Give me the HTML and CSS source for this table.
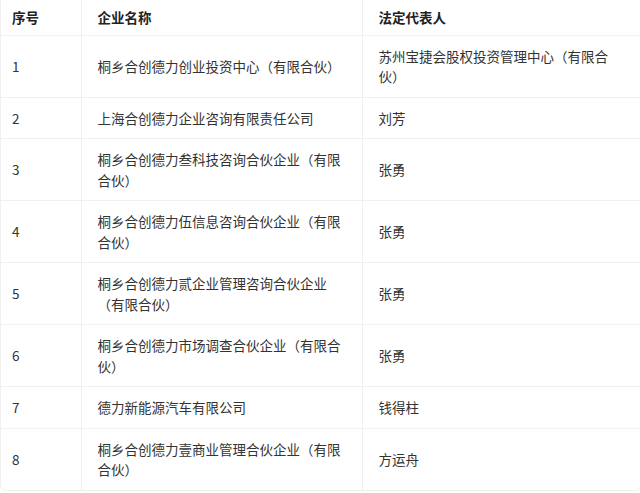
FILE: index.html
```html
<!DOCTYPE html>
<html>
  <head>
    <meta charset="utf-8">
    <title>关联企业</title>
    <link rel="stylesheet" href="styles.css">
  </head>

  <body>
    <div class="table-wrap">
      <table class="company-table">
        <colgroup>
          <col class="col-no">
          <col class="col-name">
          <col class="col-rep">
        </colgroup>
        <thead>
          <tr>
            <th>序号</th>
            <th>企业名称</th>
            <th>法定代表人</th>
          </tr>
        </thead>
        <tbody>
          <tr>
            <td>1</td>
            <td>桐乡合创德力创业投资中心（有限合伙）</td>
            <td>苏州宝捷会股权投资管理中心（有限合伙）</td>
          </tr>
          <tr>
            <td>2</td>
            <td>上海合创德力企业咨询有限责任公司</td>
            <td>刘芳</td>
          </tr>
          <tr>
            <td>3</td>
            <td>桐乡合创德力叁科技咨询合伙企业（有限合伙）</td>
            <td>张勇</td>
          </tr>
          <tr>
            <td>4</td>
            <td>桐乡合创德力伍信息咨询合伙企业（有限合伙）</td>
            <td>张勇</td>
          </tr>
          <tr>
            <td>5</td>
            <td>桐乡合创德力贰企业管理咨询合伙企业<br>（有限合伙）</td>
            <td>张勇</td>
          </tr>
          <tr>
            <td>6</td>
            <td>桐乡合创德力市场调查合伙企业（有限合伙）</td>
            <td>张勇</td>
          </tr>
          <tr>
            <td>7</td>
            <td>德力新能源汽车有限公司</td>
            <td>钱得柱</td>
          </tr>
          <tr>
            <td>8</td>
            <td>桐乡合创德力壹商业管理合伙企业（有限合伙）</td>
            <td>方运舟</td>
          </tr>
        </tbody>
      </table>
    </div>
  </body>
</html>
```

FILE: styles.css
```css
body {
  margin: 0;
  background: #fff;
  font-family: "Noto Sans CJK SC", "Noto Sans", sans-serif;
  font-size: 13.5px;
  color: #333;
}

.table-wrap {
  width: 639px;
  border: 1px solid #f0f0f0;
  border-top: none;
  border-radius: 0 0 6px 6px;
  overflow: hidden;
}

.company-table {
  width: 100%;
  table-layout: fixed;
  border-collapse: collapse;
}

.col-no {
  width: 80px;
}

.col-name {
  width: 281px;
}

.company-table th,
.company-table td {
  padding: 10px 16px;
  line-height: 20.5px;
  text-align: left;
  vertical-align: middle;
  border-bottom: 1px solid #f0f0f0;
  border-left: 1px solid #f0f0f0;
}

.company-table th {
  padding-top: 7px;
  padding-bottom: 7px;
  font-weight: bold;
  color: #222;
}

.company-table th:first-child,
.company-table td:first-child {
  padding-left: 11px;
  border-left: none;
}

.company-table th:last-child,
.company-table td:last-child {
  padding-right: 24px;
}

.company-table tbody tr:last-child td {
  border-bottom: none;
}
```
